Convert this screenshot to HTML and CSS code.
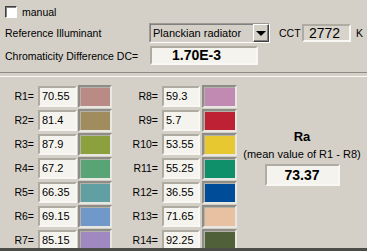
FILE: index.html
```html
<!DOCTYPE html>
<html lang="en">
<head>
  <meta charset="UTF-8">
  <title>Color Rendering</title>
  <link rel="stylesheet" href="styles.css">
</head>
<body>
  <div class="top-panel">
    <div class="row row-check">
      <span class="checkbox"></span>
      <span class="check-label">manual</span>
    </div>
    <div class="row row-ref">
      <span class="lbl lbl-ref">Reference Illuminant</span>
      <div class="combo">
        <span class="combo-text">Planckian radiator</span>
        <span class="combo-btn"><span class="arrow"></span></span>
      </div>
      <span class="lbl lbl-cct">CCT</span>
      <span class="field field-cct">2772</span>
      <span class="lbl lbl-k">K</span>
    </div>
    <div class="row row-dc">
      <span class="lbl lbl-dc">Chromaticity Difference DC=</span>
      <span class="field field-dc">1.70E-3</span>
    </div>
  </div>

  <div class="bottom-panel">
    <div class="col col-a">
      <div class="ri"><span class="rl">R1=</span><span class="field rv">70.55</span><span class="sw" style="background:#b98b84"></span></div>
      <div class="ri"><span class="rl">R2=</span><span class="field rv">81.4</span><span class="sw" style="background:#a08c5c"></span></div>
      <div class="ri"><span class="rl">R3=</span><span class="field rv">87.9</span><span class="sw" style="background:#8ca03e"></span></div>
      <div class="ri"><span class="rl">R4=</span><span class="field rv">67.2</span><span class="sw" style="background:#58a474"></span></div>
      <div class="ri"><span class="rl">R5=</span><span class="field rv">66.35</span><span class="sw" style="background:#60a0a2"></span></div>
      <div class="ri"><span class="rl">R6=</span><span class="field rv">69.15</span><span class="sw" style="background:#7098c8"></span></div>
      <div class="ri"><span class="rl">R7=</span><span class="field rv">85.15</span><span class="sw" style="background:#a088c0"></span></div>
    </div>
    <div class="col col-b">
      <div class="ri"><span class="rl">R8=</span><span class="field rv">59.3</span><span class="sw" style="background:#c08ab2"></span></div>
      <div class="ri"><span class="rl">R9=</span><span class="field rv">5.7</span><span class="sw" style="background:#be2034"></span></div>
      <div class="ri"><span class="rl">R10=</span><span class="field rv">53.55</span><span class="sw" style="background:#e8c830"></span></div>
      <div class="ri"><span class="rl">R11=</span><span class="field rv">55.25</span><span class="sw" style="background:#10906a"></span></div>
      <div class="ri"><span class="rl">R12=</span><span class="field rv">36.55</span><span class="sw" style="background:#004c98"></span></div>
      <div class="ri"><span class="rl">R13=</span><span class="field rv">71.65</span><span class="sw" style="background:#e8c0a2"></span></div>
      <div class="ri"><span class="rl">R14=</span><span class="field rv">92.25</span><span class="sw" style="background:#506038"></span></div>
    </div>
    <div class="ra">
      <div class="ra-title">Ra</div>
      <div class="ra-sub">(mean value of R1 - R8)</div>
      <span class="field field-ra">73.37</span>
    </div>
  </div>
</body>
</html>
```

FILE: styles.css
```css
body {
  margin: 0;
  background: #d4d0c8;
  font-family: 'Liberation Sans', Arial, sans-serif;
  font-size: 10.5px;
  color: #000;
  width: 367px;
  height: 251px;
  overflow: hidden;
}
.top-panel {
  height: 73px;
  border-bottom: 1px solid #8e8c86;
  box-sizing: border-box;
}
.row {
  display: flex;
  align-items: center;
}
.row-check {
  height: 23px;
  padding-left: 5px;
}
.checkbox {
  width: 10px;
  height: 10px;
  background: #fff;
  border: 1px solid;
  border-color: #404040 #fff #fff #404040;
  box-shadow: inset 1px 1px 0 #808080;
}
.check-label {
  margin-left: 5px;
}
.row-ref {
  height: 20px;
  padding-left: 5px;
}
.lbl-ref {
  width: 144px;
}
.combo {
  display: flex;
  width: 121px;
  height: 20px;
  box-sizing: border-box;
  border: 1px solid;
  border-color: #9c9a94 #fff #fff #9c9a94;
  background: #d4d0c8;
}
.combo-text {
  flex: 1;
  font-size: 11px;
  padding-left: 2px;
  line-height: 17px;
  border: 1px solid;
  border-color: #808080 #d4d0c8 #d4d0c8 #808080;
  border-right: none;
}
.combo-btn {
  width: 16px;
  box-sizing: border-box;
  border: 1px solid;
  border-color: #fff #404040 #404040 #fff;
  box-shadow: inset -1px -1px 0 #808080;
  display: flex;
  align-items: center;
  justify-content: center;
}
.arrow {
  width: 0;
  height: 0;
  border-left: 5px solid transparent;
  border-right: 5px solid transparent;
  border-top: 5px solid #000;
  margin-top: 1px;
}
.lbl-cct {
  margin-left: 9px;
  width: 23px;
}
.field {
  display: inline-block;
  box-sizing: border-box;
  background: #f4f3ee;
  border: 2px solid;
  border-color: #aeaba3 #f8f7f3 #f8f7f3 #aeaba3;
  white-space: nowrap;
  overflow: hidden;
}
.field-cct {
  width: 49px;
  height: 18px;
  background: #d8d4cc;
  font-size: 14px;
  line-height: 14px;
  padding-left: 5px;
}
.lbl-k {
  margin-left: 5px;
}
.row-dc {
  height: 25px;
  padding-left: 5px;
}
.lbl-dc {
  width: 145px;
}
.field-dc {
  width: 108px;
  height: 19px;
  font-size: 14px;
  font-weight: bold;
  line-height: 15px;
  padding-left: 20px;
}
.bottom-panel {
  display: flex;
  margin-top: 3px;
  border-top: 1px solid #fbfaf6;
  height: 164px;
  padding-top: 7px;
  overflow: hidden;
  border-bottom: 3px solid #4e4c48;
}
.col {
  display: flex;
  flex-direction: column;
  flex-shrink: 0;
}
.ri {
  display: flex;
  align-items: center;
  height: 24px;
  flex-shrink: 0;
}
.rl {
  text-align: right;
  box-sizing: border-box;
  padding-right: 4px;
}
.col-a .rl {
  width: 38px;
}
.col-b .rl {
  width: 50px;
}
.rv {
  width: 39px;
  height: 21px;
  font-size: 11px;
  line-height: 17px;
  padding-left: 2px;
}
.col-b .rv {
  width: 38px;
}
.sw {
  display: inline-block;
  width: 34px;
  height: 23px;
  margin-left: 1px;
  box-sizing: border-box;
  border: 2px solid;
  border-color: #8e8c86 #e9e7e1 #e9e7e1 #8e8c86;
  box-shadow: inset 1px 1px 0 #b4b1a9;
}
.col-b .sw {
  width: 35px;
  margin-left: 2px;
}
.ra {
  flex: 1;
  display: flex;
  flex-direction: column;
  align-items: center;
  padding-top: 45px;
}
.ra-title {
  font-size: 13px;
  font-weight: bold;
}
.ra-sub {
  font-size: 11px;
  margin-top: 4px;
}
.field-ra {
  margin-top: 4px;
  width: 75px;
  height: 22px;
  font-size: 14px;
  font-weight: bold;
  line-height: 18px;
  text-align: center;
}
```
